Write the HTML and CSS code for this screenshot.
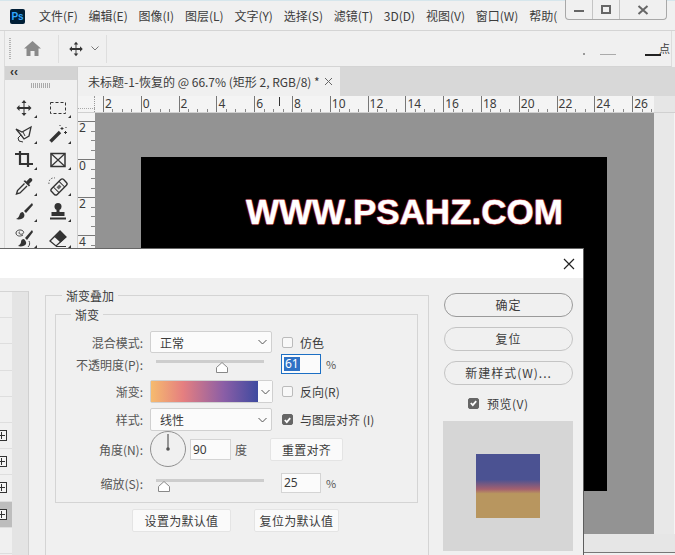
FILE: index.html
```html
<!DOCTYPE html>
<html lang="en">

<head>
    <meta charset="UTF-8">
    <meta name="viewport" content="width=device-width, initial-scale=1.0">
    <title>Photoshop</title>

    <link rel="stylesheet" href="styles.css">

</head>

<body>
    <div class="app">
        <!-- title bar -->
        <div class="menuBar">
            <div class="psLogo">Ps</div>
            <div class="menuList">
                <span>文件(F)</span>
                <span>编辑(E)</span>
                <span>图像(I)</span>
                <span>图层(L)</span>
                <span>文字(Y)</span>
                <span>选择(S)</span>
                <span>滤镜(T)</span>
                <span>3D(D)</span>
                <span>视图(V)</span>
                <span>窗口(W)</span>
                <span>帮助(H)</span>
            </div>
            <div class="winControls">
                <div class="winBtn"><svg width="12" height="12" viewBox="0 0 12 12"><rect x="1" y="6" width="10" height="2" fill="#666"/></svg></div>
                <div class="winBtn"><svg width="12" height="12" viewBox="0 0 12 12"><rect x="2" y="2" width="8" height="7" fill="none" stroke="#666" stroke-width="2"/></svg></div>
                <div class="winBtn winClose"><svg width="12" height="12" viewBox="0 0 12 12"><path d="M1.5 2l9 8M10.5 2l-9 8" stroke="#666" stroke-width="2"/></svg></div>
            </div>
        </div>

        <!-- options bar -->
        <div class="optionsBar">
            <div class="grip"></div>
            <svg class="homeIcon" width="17" height="15" viewBox="0 0 17 15"><path d="M8.5 0L17 7.5h-2.5V15h-4v-5h-4v5h-4V7.5H0z" fill="#8a8a8a"/></svg>
            <div class="optSep"></div>
            <svg class="optMove" width="18" height="18" viewBox="0 0 20 20"><use href="#moveGlyph"/></svg>
            <svg class="optChevron" width="8" height="5" viewBox="0 0 8 5"><path d="M.5.5L4 4 7.5.5" fill="none" stroke="#777"/></svg>
            <div class="optSep"></div>
            <div class="optRight">
                <i class="optDot"></i>
                <i class="optLine"></i>
                <i class="optBlack"></i>
                <span class="optChar">点</span>
            </div>
        </div>

        <div class="workArea">
            <!-- toolbox -->
            <div class="toolbox">
                <div class="toolboxHead">‹‹</div>
                <div class="toolboxGrip"></div>
                <div class="toolGrid">
                    <div class="tool"><svg width="20" height="20" viewBox="0 0 20 20"><use href="#moveGlyph"/></svg></div>
                    <div class="tool"><svg width="20" height="20" viewBox="0 0 20 20"><rect x="2.5" y="4.5" width="15" height="11" fill="none" stroke="#333" stroke-dasharray="3 2"/></svg></div>
                    <div class="tool"><svg width="20" height="20" viewBox="0 0 20 20"><path d="M2 5l6 3 9-5-2 9-5 3-3-4z" fill="none" stroke="#333" stroke-width="1.3"/><path d="M7 11l-3 3 1 3 4 1M9 8l2 4" fill="none" stroke="#333"/></svg></div>
                    <div class="tool"><svg width="20" height="20" viewBox="0 0 20 20"><path d="M2.5 17.5L12 8" stroke="#333" stroke-width="3.4"/><path d="M14 3v3M12.5 4.500h3M17.500 7v3M16 8.500h3M12 1l0 1M18 3v1" stroke="#333"/></svg></div>
                    <div class="tool"><svg width="20" height="20" viewBox="0 0 20 20"><path d="M1 4h13v13M6 1v13h13" fill="none" stroke="#333" stroke-width="2.200"/></svg></div>
                    <div class="tool"><svg width="20" height="20" viewBox="0 0 20 20"><rect x="3" y="3.500" width="14" height="13" fill="none" stroke="#333" stroke-width="1.500"/><path d="M3 3.500l14 13M17 3.500l-14 13" stroke="#333" stroke-width="1.200"/></svg></div>
                    <div class="tool"><svg width="20" height="20" viewBox="0 0 20 20"><path d="M10.500 7.500L3.500 14.500 2.500 18l3.500-1 7-7" fill="none" stroke="#333" stroke-width="1.400"/><path d="M9.500 5l5.500 5.500 1.200-1.200-1.200-1.200 3-3c1.200-1.600-1-3.800-2.700-2.700l-3 3-1.200-1.200z" fill="#333"/></svg></div>
                    <div class="tool"><svg width="20" height="20" viewBox="0 0 20 20"><g transform="rotate(-45 11 11)"><rect x="2.500" y="7" width="17" height="8" rx="2" fill="none" stroke="#333" stroke-width="1.400"/><path d="M7 7v8M15 7v8" stroke="#333"/><path d="M9 9.500h4v3H9z" fill="#666"/></g><path d="M1 8a5 5 0 0 1 6-6" fill="none" stroke="#555" stroke-dasharray="1.500 1.500"/></svg></div>
                    <div class="tool"><svg width="20" height="20" viewBox="0 0 20 20"><path d="M18 1L10 9l2 2 7-8z" fill="#333"/><path d="M9 10c-2 0-3 1-3.500 3-.300 1.500-1.500 3-3.500 4 3 1 7 0 8-2 .700-1.500.500-3-.500-4z" fill="#333"/></svg></div>
                    <div class="tool"><svg width="20" height="20" viewBox="0 0 20 20"><circle cx="10" cy="4.500" r="3.500" fill="#333"/><path d="M8.500 7h3v3h5v4h-13v-4h5z" fill="#333"/><rect x="2" y="15.500" width="16" height="2" fill="#333"/></svg></div>
                    <div class="tool"><svg width="20" height="20" viewBox="0 0 20 20"><path d="M18 2l-7 8 2 2 6-8z" fill="#333"/><path d="M10 11c-2 0-3 1-3 3 0 1-1 3-3 4 3 1 7 0 8-2 .500-1.500 0-3-2-5z" fill="#333"/><path d="M9 7C6 9 2 8 2 5s5-4 7-2-1 4-3 3-1-2 0-2" fill="none" stroke="#444"/><path d="M15 13c1 2 1 4-1 6" fill="none" stroke="#444"/></svg></div>
                    <div class="tool"><svg width="20" height="20" viewBox="0 0 20 20"><path d="M2 13l6 5 10-9-6-6z" fill="none" stroke="#333" stroke-width="1.300"/><path d="M6.500 9l6 5.500 5.500-5.500-6-6z" fill="#333"/><path d="M8 18.500h10" stroke="#333"/></svg></div>
                </div>
            </div>

            <!-- document -->
            <div class="docArea">
                <div class="tabBar">
                    <div class="docTab">
                        <span>未标题-1-恢复的 @ 66.7% (矩形 2, RGB/8) *</span>
                        <svg width="9" height="9" viewBox="0 0 9 9"><path d="M1 1l7 7M8 1L1 8" stroke="#666"/></svg>
                    </div>
                </div>
                <div class="rulerTop">
                    <div class="rulerCorner"></div>
                    <div class="rulerH">
                        <span>2</span><span>0</span><span>2</span><span>4</span><span>6</span><span>8</span><span>10</span><span>12</span><span>14</span><span>16</span><span>18</span><span>20</span><span>22</span><span>24</span><span>26</span>
                        <i class="rulerCursor"></i>
                    </div>
                    <div class="rulerEnd"></div>
                </div>
                <div class="docBody">
                    <div class="rulerV">
                        <span>2</span><span>0</span><span>2</span><span>4</span><span>6</span><span>8</span><span>10</span><span>12</span><span>14</span><span>16</span><span>18</span>
                    </div>
                    <div class="pasteboard">
                        <div class="canvasDoc">
                            <div class="canvasText">WWW.PSAHZ.COM</div>
                        </div>
                    </div>
                    <div class="sidePanel"></div>
                </div>
                <div class="scrollStrip"></div>
            </div>
        </div>

        <!-- layer style dialog -->
        <div class="dialog">
            <div class="dialogHead">
                <svg width="12" height="12" viewBox="0 0 12 12"><path d="M1 1l10 10M11 1L1 11" stroke="#222" stroke-width="1.200"/></svg>
            </div>
            <div class="dialogBody">
                <div class="styleList">
                    <div class="styleRows">
                        <div class="styleRow"></div>
                        <div class="styleRow"></div>
                        <div class="styleRow"></div>
                        <div class="styleRow"></div>
                        <div class="styleRow"></div>
                        <div class="styleRow"><i class="plusBox"></i></div>
                        <div class="styleRow"><i class="plusBox"></i></div>
                        <div class="styleRow"><i class="plusBox"></i></div>
                        <div class="styleRow isSelected"><i class="plusBox"></i></div>
                        <div class="styleRow"></div>
                    </div>
                    <div class="styleScroll"></div>
                </div>

                <fieldset class="groupOuter">
                    <legend>渐变叠加</legend>
                    <fieldset class="groupInner">
                        <legend>渐变</legend>

                        <div class="formRow rowBlend">
                            <label class="formLabel">混合模式:</label>
                            <div class="selectBox">正常<svg width="9" height="6" viewBox="0 0 9 6"><path d="M.5 1L4.500 5 8.500 1" fill="none" stroke="#555"/></svg></div>
                            <div class="checkWrap"><i class="check"></i>仿色</div>
                        </div>

                        <div class="formRow rowOpacity">
                            <label class="formLabel">不透明度(P):</label>
                            <div class="sliderBox">
                                <div class="sliderTrack"></div>
                                <svg class="sliderThumb" style="left: 66px" width="12" height="11" viewBox="0 0 12 11"><path d="M6 .5l5.500 5v5H.5v-5z" fill="#fff" stroke="#888"/></svg>
                            </div>
                            <div class="numInput isFocused"><span class="numSel">61</span></div>
                            <span class="unit">%</span>
                        </div>

                        <div class="formRow rowGradient">
                            <label class="formLabel">渐变:</label>
                            <div class="gradientBox">
                                <div class="gradientBar"></div>
                                <div class="gradientArrow"><svg width="9" height="6" viewBox="0 0 9 6"><path d="M.5 1L4.500 5 8.500 1" fill="none" stroke="#555"/></svg></div>
                            </div>
                            <div class="checkWrap"><i class="check"></i>反向(R)</div>
                        </div>

                        <div class="formRow rowStyle">
                            <label class="formLabel">样式:</label>
                            <div class="selectBox">线性<svg width="9" height="6" viewBox="0 0 9 6"><path d="M.5 1L4.500 5 8.500 1" fill="none" stroke="#555"/></svg></div>
                            <div class="checkWrap"><i class="check isChecked"><svg width="10" height="10" viewBox="0 0 10 10"><path d="M2 5l2.200 2.300L8 3" fill="none" stroke="#fff" stroke-width="2"/></svg></i>与图层对齐 (I)</div>
                        </div>

                        <div class="formRow rowAngle">
                            <label class="formLabel">角度(N):</label>
                            <svg class="dial" width="36" height="36" viewBox="0 0 36 36"><circle cx="18" cy="18" r="17.500" fill="#f0f0f0" stroke="#8f8f8f"/><path d="M18 3v15" stroke="#777" stroke-width="1.500"/><circle cx="18" cy="18" r="1.800" fill="#555"/></svg>
                            <div class="numInput angleInput">90</div>
                            <span class="unitAngle">度</span>
                            <div class="flatBtn alignBtn">重置对齐</div>
                        </div>

                        <div class="formRow rowScale">
                            <label class="formLabel">缩放(S):</label>
                            <div class="sliderBox">
                                <div class="sliderTrack"></div>
                                <svg class="sliderThumb" style="left: 8px" width="12" height="11" viewBox="0 0 12 11"><path d="M6 .5l5.500 5v5H.5v-5z" fill="#fff" stroke="#888"/></svg>
                            </div>
                            <div class="numInput">25</div>
                            <span class="unit">%</span>
                        </div>
                    </fieldset>

                    <div class="defaultBtns">
                        <div class="flatBtn btnSet">设置为默认值</div>
                        <div class="flatBtn btnReset">复位为默认值</div>
                    </div>
                </fieldset>

                <div class="dialogSide">
                    <div class="pillBtn isPrimary">确定</div>
                    <div class="pillBtn">复位</div>
                    <div class="pillBtn">新建样式(W)...</div>
                    <div class="previewCheck"><i class="check isChecked"><svg width="10" height="10" viewBox="0 0 10 10"><path d="M2 5l2.200 2.300L8 3" fill="none" stroke="#fff" stroke-width="2"/></svg></i>预览(V)</div>
                    <div class="previewBox">
                        <div class="previewSwatch"></div>
                    </div>
                </div>
            </div>
        </div>

        <svg width="0" height="0" class="svgDefs">
            <symbol id="moveGlyph" viewBox="0 0 20 20">
                <path d="M10 2l2.500 3h-2v4h4V7l3 3-3 3v-2h-4v4h2L10 18l-2.500-3h2v-4h-4v2l-3-3 3-3v2h4V5h-2z" fill="#333"/>
            </symbol>
        </svg>
    </div>
</body>

</html>
```

FILE: styles.css
```css
* {
    box-sizing: border-box;
}

html,
body {
    margin: 0;
    padding: 0;
}

body {
    font-family: "Noto Sans CJK SC", "Noto Sans", sans-serif;
    font-size: 12px;
    color: #3c3c3c;
}

.app {
    position: relative;
    width: 675px;
    height: 555px;
    overflow: hidden;
    background-color: #f0f0f0;
}

.svgDefs {
    position: absolute;
}

/* title bar */

.menuBar {
    display: flex;
    height: 31px;
    padding-left: 10px;
    border-top: 1px solid #d6e6ec;
    border-bottom: 1px solid #d4d4d4;
}

.psLogo {
    width: 15px;
    height: 15px;
    margin-top: 8px;
    border-radius: 2px;
    background-color: #001e36;
    color: #31a8ff;
    font: bold 10px/15px "Liberation Sans", sans-serif;
    text-align: center;
}

.menuList {
    display: flex;
    gap: 10.8px;
    width: 519px;
    margin-left: 14px;
    overflow: hidden;
    line-height: 30px;
    white-space: nowrap;
}

.winControls {
    display: flex;
    width: 102px;
    height: 20px;
    margin-top: -1px;
    margin-left: 7px;
    border: 1px solid #a8a8a8;
    border-top: none;
    border-radius: 0 0 4px 4px;
    background-color: #f0f0f0;
}

.winBtn {
    display: flex;
    justify-content: center;
    align-items: center;
    width: 27px;
    border-right: 1px solid #c4c4c4;
}

.winClose {
    flex-grow: 1;
    border-right: none;
}

/* options bar */

.optionsBar {
    display: flex;
    align-items: center;
    height: 36px;
    margin-left: 4px;
    margin-right: 3px;
    border-left: 1px solid #dcdcdc;
    border-right: 1px solid #dcdcdc;
    border-bottom: 1px solid #d4d4d4;
}

.grip {
    width: 2px;
    height: 22px;
    margin-left: 4px;
    background-image: linear-gradient(#b4b4b4 50%, transparent 50%);
    background-size: 2px 2px;
}

.homeIcon {
    margin-left: 13px;
}

.optSep {
    width: 1px;
    height: 28px;
    background-color: #dedede;
}

.homeIcon + .optSep {
    margin-left: 17px;
}

.optMove {
    margin-left: 8px;
}

.optChevron {
    margin-left: 6px;
    margin-right: 7px;
}

.optRight {
    position: relative;
    flex-grow: 1;
    align-self: stretch;
}

.optRight i {
    position: absolute;
    display: block;
}

.optDot {
    left: 476px;
    top: 22px;
    width: 2px;
    height: 2px;
    background-color: #999;
}

.optLine {
    left: 493px;
    top: 23px;
    width: 16px;
    height: 1px;
    background-color: #aaa;
}

.optBlack {
    left: 538px;
    top: 23px;
    width: 16px;
    height: 2px;
    background-color: #222;
}

.optChar {
    position: absolute;
    left: 552px;
    top: 9px;
    line-height: 16px;
    font-size: 11px;
}

/* toolbox */

.workArea {
    display: flex;
    height: 488px;
}

.toolbox {
    width: 74px;
    margin-left: 4px;
    border-left: 1px solid #dcdcdc;
    border-right: 1px solid #cfcfcf;
}

.toolboxHead {
    height: 13px;
    padding-left: 5px;
    background-color: #d3d3d3;
    color: #333;
    font: bold 12px/10px "Liberation Sans", sans-serif;
}

.toolboxGrip {
    width: 20px;
    height: 5px;
    margin: 3px 0 7px 26px;
    background-image: linear-gradient(90deg, #aaa 50%, transparent 50%);
    background-size: 2px 2px;
}

.toolGrid {
    display: grid;
    grid-template-columns: 34px 34px;
    grid-auto-rows: 26px;
    margin-left: 2px;
}

.tool {
    position: relative;
    display: flex;
    justify-content: center;
    align-items: center;
}

.tool::after {
    content: "";
    position: absolute;
    right: 4px;
    bottom: 3px;
    border-left: 3px solid transparent;
    border-bottom: 3px solid #333;
}

/* document area */

.docArea {
    display: flex;
    flex-direction: column;
    flex-grow: 1;
    min-width: 0;
}

.tabBar {
    height: 29px;
    background-color: #d8d8d8;
}

.docTab {
    display: flex;
    align-items: center;
    gap: 4px;
    width: 262px;
    height: 100%;
    padding-left: 10px;
    background-color: #f0f0f0;
    white-space: nowrap;
}

.rulerTop {
    display: flex;
    height: 17px;
    background-color: #f4f4f4;
    border-bottom: 1px solid #d0d0d0;
}

.rulerCorner {
    width: 17px;
    border-right: 1px dotted #999;
    background-image: linear-gradient(90deg, #aaa 50%, transparent 50%);
    background-size: 2px 1px;
    background-repeat: repeat-x;
    background-position: 0 12px;
}

.rulerH {
    position: relative;
    display: flex;
    width: 559px;
    padding-left: 8px;
    overflow: hidden;
}

.rulerH span {
    flex: 0 0 37.8px;
    padding-left: 2px;
    line-height: 16px;
    font-family: "Noto Sans", sans-serif;
    font-size: 12px;
    background:
        linear-gradient(#777, #777) 0 0 / 1px 100% no-repeat,
        linear-gradient(#888, #888) 9.45px 100% / 1px 3px no-repeat,
        linear-gradient(#888, #888) 18.9px 100% / 1px 3px no-repeat,
        linear-gradient(#888, #888) 28.35px 100% / 1px 3px no-repeat;
}

.rulerCursor {
    position: absolute;
    left: 184px;
    top: 1px;
    width: 1px;
    height: 9px;
    background-color: #333;
}

.rulerEnd {
    flex-grow: 1;
    background-color: #e6e6e6;
}

.docBody {
    display: flex;
    height: 421px;
}

.rulerV {
    width: 17px;
    padding-top: 8px;
    overflow: hidden;
    background-color: #f4f4f4;
}

.rulerV span {
    display: block;
    height: 38px;
    padding-left: 1px;
    line-height: 13px;
    font-family: "Noto Sans", sans-serif;
    background:
        linear-gradient(#777, #777) 0 0 / 100% 1px no-repeat,
        linear-gradient(#888, #888) 100% 9.5px / 4px 1px no-repeat,
        linear-gradient(#888, #888) 100% 19px / 4px 1px no-repeat,
        linear-gradient(#888, #888) 100% 28.5px / 4px 1px no-repeat;
}

.pasteboard {
    width: 559px;
    padding: 44px 0 0 46px;
    background-color: #939393;
}

.canvasDoc {
    width: 466px;
    height: 334px;
    padding: 36px 0 0 105px;
    background-color: #000;
}

.canvasText {
    color: #fff;
    font: bold 35px/37px "Liberation Sans", sans-serif;
    white-space: nowrap;
    -webkit-text-stroke: 0.4px #fff;
    text-shadow: 1px 0 1px #8a0f18, -1px 0 1px #8a0f18, 0 1px 1px #8a0f18, 0 -1px 1px #8a0f18;
}

.sidePanel {
    flex-grow: 1;
    background-color: #e8e8e8;
    border-right: 1px solid #f4f4f4;
}

.scrollStrip {
    height: 19px;
    background-color: #e6e6e6;
    border-bottom: 1px solid #777;
}

/* dialog */

.dialog {
    position: absolute;
    left: 0;
    top: 248px;
    width: 584px;
    height: 307px;
    overflow: hidden;
    border-top: 1px solid #666;
    border-right: 1px solid #5e5e5e;
    background-color: #f0f0f0;
}

.dialogHead {
    display: flex;
    justify-content: flex-end;
    align-items: center;
    height: 29px;
    padding-right: 8px;
    background-color: #fff;
}

.dialogBody {
    display: flex;
    align-items: flex-start;
}

.styleList {
    display: flex;
    flex-shrink: 0;
    width: 29px;
    height: 270px;
    margin-top: 13px;
    border-top: 1px solid #d4d4d4;
    border-right: 1px solid #d0d0d0;
}

.styleRows {
    width: 12px;
}

.styleRow {
    display: flex;
    align-items: center;
    height: 26.2px;
    border-bottom: 1px solid #dedede;
}

.styleRow.isSelected {
    background-color: #bdbdbd;
}

.plusBox {
    position: relative;
    display: block;
    width: 10px;
    height: 11px;
    margin-left: -3px;
    border: 1px solid #333;
    background-color: #f4f4f4;
}

.plusBox::before {
    content: "";
    position: absolute;
    left: 0;
    top: 4px;
    width: 7px;
    height: 1px;
    background-color: #333;
}

.plusBox::after {
    content: "";
    position: absolute;
    left: 3px;
    top: 1px;
    width: 1px;
    height: 7px;
    background-color: #333;
}

.styleScroll {
    flex-grow: 1;
    height: 100%;
    background-color: #e4e4e4;
}

fieldset {
    min-width: 0;
    margin: 0;
    border: 1px solid #d4d4d4;
}

legend {
    padding: 0 4px;
    line-height: 17px;
    white-space: nowrap;
}

.groupOuter {
    flex-shrink: 0;
    width: 384px;
    height: 300px;
    margin: 9px 0 0 16px;
    padding: 2px 0 0 9px;
}

.groupOuter > legend {
    margin-left: 7px;
}

.groupInner {
    width: 363px;
    padding: 8px 0 9px 0;
}

.groupInner > legend {
    margin-left: 15px;
}

.formRow {
    display: flex;
    align-items: center;
}

.rowBlend {
    height: 22px;
}

.rowOpacity {
    height: 20px;
    margin-top: 1px;
}

.rowGradient {
    height: 23px;
    margin-top: 6px;
}

.rowStyle {
    height: 23px;
    margin-top: 5px;
}

.rowAngle {
    height: 36px;
}

.rowScale {
    height: 20px;
    margin-top: 6px;
}

.formLabel {
    flex-shrink: 0;
    width: 87px;
    margin-right: 7px;
    color: #555;
    text-align: right;
    white-space: nowrap;
}

.selectBox {
    display: flex;
    justify-content: space-between;
    align-items: center;
    flex-shrink: 0;
    width: 122px;
    height: 100%;
    padding: 0 4px 0 9px;
    border-radius: 2px;
    border: 1px solid #d0d0d0;
    background-color: #fbfbfb;
}

.checkWrap {
    display: flex;
    align-items: center;
    gap: 7px;
    margin-left: 10px;
    white-space: nowrap;
}

.check {
    display: flex;
    justify-content: center;
    align-items: center;
    width: 11px;
    height: 11px;
    border-radius: 2px;
    border: 1px solid #bbb;
    background-color: #f8f8f8;
}

.check.isChecked {
    border-color: #666;
    background-color: #666;
}

.sliderBox {
    position: relative;
    flex-shrink: 0;
    width: 122px;
    height: 100%;
}

.sliderTrack {
    position: absolute;
    left: 6px;
    top: 6px;
    width: 108px;
    height: 3px;
    background-color: #cdcdcd;
}

.sliderThumb {
    position: absolute;
    top: 8px;
}

.numInput {
    flex-shrink: 0;
    width: 40px;
    height: 100%;
    margin-left: 9px;
    padding-left: 2px;
    border: 1px solid #d4d4d4;
    background-color: #fbfbfb;
    line-height: 18px;
    font-family: "Noto Sans", sans-serif;
}

.numInput.isFocused {
    border-color: #1c6fc4;
}

.numSel {
    display: inline-block;
    height: 14px;
    margin-top: 2px;
    padding: 0 1px;
    background-color: #2f72c5;
    color: #fff;
    line-height: 14px;
    vertical-align: top;
}

.unit {
    margin-left: 5px;
    color: #555;
    font-size: 11px;
}

.gradientBox {
    display: flex;
    flex-shrink: 0;
    width: 123px;
    height: 100%;
    border: 1px solid #d0d0d0;
    border-radius: 2px;
}

.gradientBar {
    width: 107px;
    background-image: linear-gradient(90deg, #f6bb6e 0%, #e57f80 30%, #8b5ea6 68%, #3e4aa0 100%);
}

.gradientArrow {
    display: flex;
    justify-content: center;
    align-items: center;
    flex-grow: 1;
    background-color: #fbfbfb;
}

.rowGradient .checkWrap {
    margin-left: 9px;
}

.dial {
    flex-shrink: 0;
}

.angleInput {
    width: 41px;
    height: 21px;
    margin-left: 4px;
    line-height: 19px;
}

.unitAngle {
    margin-left: 4px;
    color: #555;
}

.flatBtn {
    display: flex;
    justify-content: center;
    align-items: center;
    height: 23px;
    border-radius: 2px;
    background-color: #fafafa;
    border: 1px solid #e4e4e4;
    letter-spacing: 0.3px;
    white-space: nowrap;
}

.alignBtn {
    width: 73px;
    margin-left: 23px;
}

.defaultBtns {
    display: flex;
    gap: 23px;
    margin: 6px 0 0 77px;
}

.btnSet {
    width: 99px;
}

.btnReset {
    width: 85px;
}

.dialogSide {
    display: flex;
    flex-direction: column;
    flex-shrink: 0;
    width: 130px;
    margin: 15px 0 0 15px;
}

.pillBtn {
    width: 129px;
    height: 24px;
    border-radius: 12px;
    border: 1px solid #c4c4c4;
    line-height: 22px;
    letter-spacing: 1px;
    text-align: center;
    white-space: nowrap;
}

.pillBtn + .pillBtn {
    margin-top: 10px;
}

.pillBtn.isPrimary {
    border: 1.5px solid #9a9a9a;
}

.previewCheck {
    display: flex;
    align-items: center;
    gap: 8px;
    height: 18px;
    margin: 9px 0 0 24px;
    letter-spacing: 0.5px;
}

.previewBox {
    display: flex;
    justify-content: center;
    align-items: center;
    width: 130px;
    height: 130px;
    margin: 9px 0 0 -1px;
    background-color: #d6d6d6;
}

.previewSwatch {
    width: 64px;
    height: 64px;
    background-image: linear-gradient(#4b5292 0%, #4b5292 40%, #a5606f 55%, #b8965f 62%, #b8965f 100%);
}
```
